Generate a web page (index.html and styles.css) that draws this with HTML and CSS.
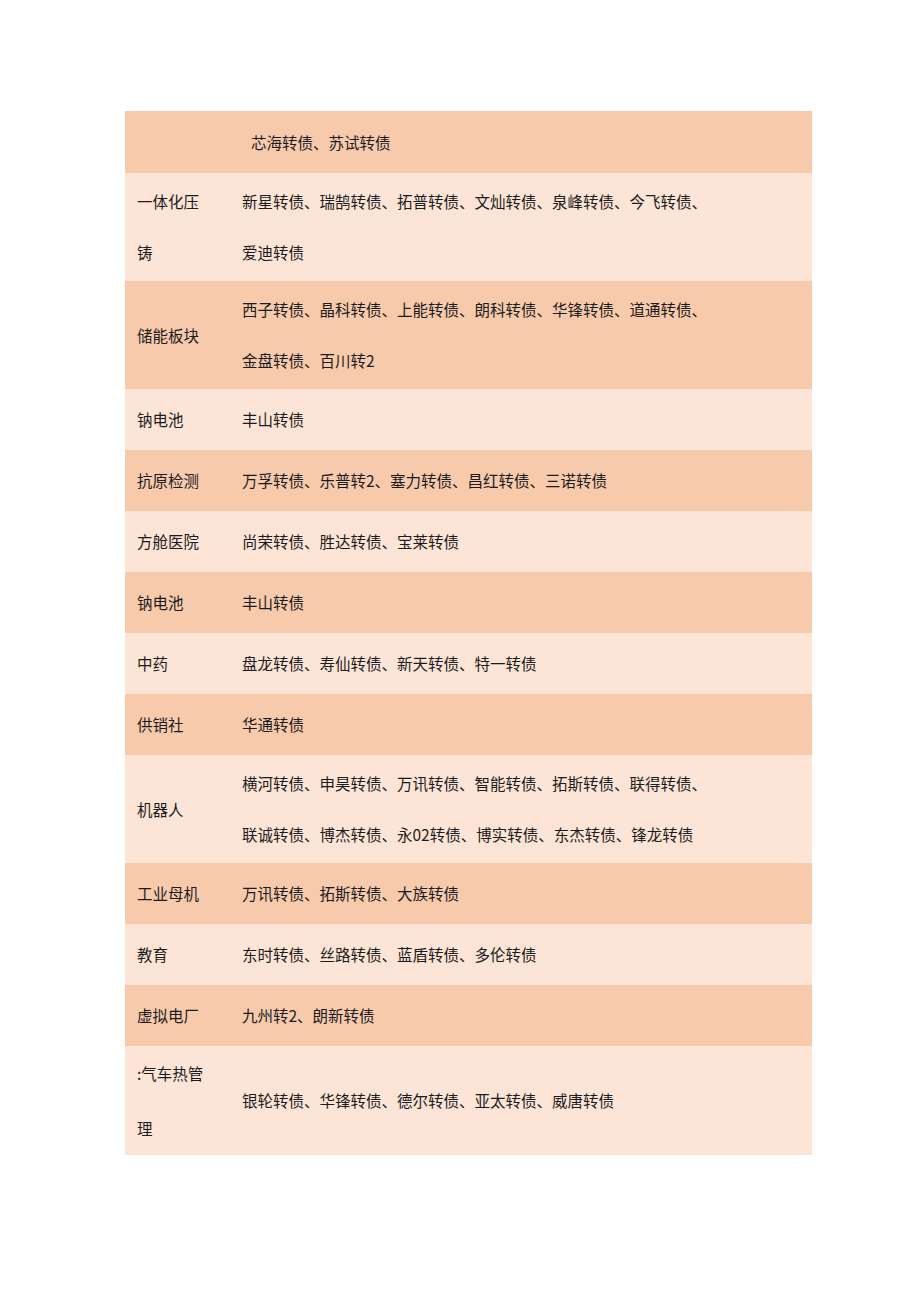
FILE: index.html
```html
<!DOCTYPE html>
<html lang="zh">
<head>
<meta charset="utf-8">
<link rel="stylesheet" href="styles.css">
</head>
<body>
<table class="bonds">
  <tr class="dark r1"><td class="c1"></td><td class="c2 indent">芯海转债、苏试转债</td></tr>
  <tr class="light tall"><td class="c1">一体化压<br>铸</td><td class="c2">新星转债、瑞鹄转债、拓普转债、文灿转债、泉峰转债、今飞转债、<br>爱迪转债</td></tr>
  <tr class="dark tall"><td class="c1">储能板块</td><td class="c2">西子转债、晶科转债、上能转债、朗科转债、华锋转债、道通转债、<br>金盘转债、百川转2</td></tr>
  <tr class="light"><td class="c1">钠电池</td><td class="c2">丰山转债</td></tr>
  <tr class="dark"><td class="c1">抗原检测</td><td class="c2">万孚转债、乐普转2、塞力转债、昌红转债、三诺转债</td></tr>
  <tr class="light"><td class="c1">方舱医院</td><td class="c2">尚荣转债、胜达转债、宝莱转债</td></tr>
  <tr class="dark"><td class="c1">钠电池</td><td class="c2">丰山转债</td></tr>
  <tr class="light"><td class="c1">中药</td><td class="c2">盘龙转债、寿仙转债、新天转债、特一转债</td></tr>
  <tr class="dark"><td class="c1">供销社</td><td class="c2">华通转债</td></tr>
  <tr class="light tall"><td class="c1">机器人</td><td class="c2">横河转债、申昊转债、万讯转债、智能转债、拓斯转债、联得转债、<br>联诚转债、博杰转债、永02转债、博实转债、东杰转债、锋龙转债</td></tr>
  <tr class="dark"><td class="c1">工业母机</td><td class="c2">万讯转债、拓斯转债、大族转债</td></tr>
  <tr class="light"><td class="c1">教育</td><td class="c2">东时转债、丝路转债、蓝盾转债、多伦转债</td></tr>
  <tr class="dark"><td class="c1">虚拟电厂</td><td class="c2">九州转2、朗新转债</td></tr>
  <tr class="light last"><td class="c1">:气车热管<br>理</td><td class="c2">银轮转债、华锋转债、德尔转债、亚太转债、威唐转债</td></tr>
</table>
</body>
</html>
```
FILE: styles.css
```css
html, body {
  margin: 0;
  padding: 0;
  background: #ffffff;
}
body {
  padding-top: 111px;
  padding-left: 125px;
  font-family: "Noto Sans CJK SC", "Noto Sans", sans-serif;
  font-size: 15.5px;
  color: #1c1c1c;
}
.bonds {
  border-collapse: collapse;
  width: 687px;
}
.bonds td {
  padding: 5px 0;
  line-height: 51px;
  vertical-align: middle;
  white-space: nowrap;
}
.bonds .c1 {
  width: 104px;
  padding-left: 12px;
}
.bonds .c2 {
  padding-left: 1px;
}
.bonds .indent {
  padding-left: 10px;
}
.dark { background: #f7caac; }
.light { background: #fce4d6; }
.r1 td { padding-top: 5.5px; padding-bottom: 5.5px; }
.tall td { padding-top: 3px; padding-bottom: 3px; }
.last td { padding: 0; }
.last .c1 { line-height: 54.5px; }
```
